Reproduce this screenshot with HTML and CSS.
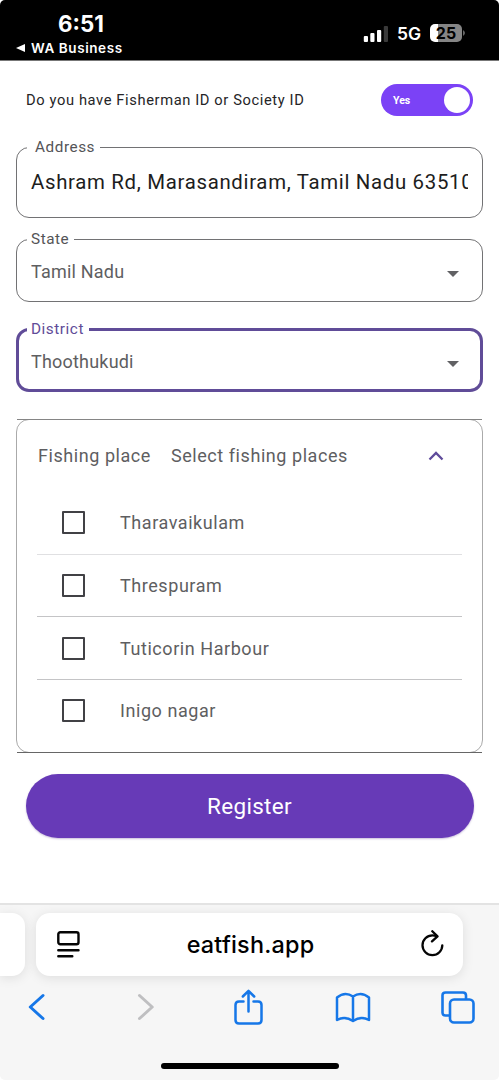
FILE: index.html
```html
<!DOCTYPE html>
<html lang="en">
<head>
<meta charset="utf-8">
<title>Register</title>
<link rel="stylesheet" href="styles.css">
</head>
<body>
<div class="screen">
  <header class="status">
    <div class="status-left">
      <div class="clock">6:51</div>
      <div class="back-app"><svg width="10" height="8" viewBox="0 0 10 8"><path d="M0 4 9 0v8z" fill="#fff"/></svg><span class="app-name">WA Business</span></div>
    </div>
    <div class="status-right">
      <svg width="26" height="17" viewBox="0 0 26 17"><g fill="#fff"><rect x="0.8" y="11" width="4.2" height="6" rx="1"/><rect x="7.3" y="8" width="4.2" height="9" rx="1"/><rect x="14" y="5" width="4.2" height="12" rx="1"/></g><rect x="20.8" y="1" width="4.2" height="16" rx="1" fill="#3a3a3a"/></svg>
      <span class="network">5G</span>
      <div class="battery"><span class="battery-level">25</span></div>
      <svg class="battery-cap" width="2" height="6" viewBox="0 0 2 6"><path d="M0 0q4 3 0 6z" fill="#666"/></svg>
    </div>
  </header>

  <main class="form">
    <div class="question">
      <span class="question-text">Do you have Fisherman ID or Society ID</span>
      <div class="toggle"><span class="toggle-label">Yes</span><span class="knob"></span></div>
    </div>

    <fieldset class="field address">
      <legend><span class="legend-text">Address</span></legend>
      <div class="value"><span class="value-text">Ashram Rd, Marasandiram, Tamil Nadu 63510</span></div>
    </fieldset>
    <fieldset class="field select state">
      <legend><span class="legend-text">State</span></legend>
      <div class="value"><span class="value-text">Tamil Nadu</span><svg class="caret" width="12" height="6" viewBox="0 0 12 6"><path d="M0 0h12L6 6z" fill="#616164"/></svg></div>
    </fieldset>
    <fieldset class="field select district">
      <legend><span class="legend-text">District</span></legend>
      <div class="value"><span class="value-text">Thoothukudi</span><svg class="caret" width="12" height="6" viewBox="0 0 12 6"><path d="M0 0h12L6 6z" fill="#616164"/></svg></div>
    </fieldset>

    <section class="panel">
      <div class="panel-head">
        <span class="panel-title">Fishing place</span>
        <span class="panel-hint">Select fishing places</span>
        <svg class="chevron" width="16" height="10" viewBox="0 0 16 10"><path d="M1.5 8.500 8 2l6.500 6.500" fill="none" stroke="#5f4b9b" stroke-width="2.300"/></svg>
      </div>
      <ul class="places">
        <li class="place"><span class="box"></span><span class="place-name">Tharavaikulam</span></li>
        <li class="place"><span class="box"></span><span class="place-name">Threspuram</span></li>
        <li class="place"><span class="box"></span><span class="place-name">Tuticorin Harbour</span></li>
        <li class="place"><span class="box"></span><span class="place-name">Inigo nagar</span></li>
      </ul>
    </section>

    <button class="register">Register</button>
  </main>

  <footer class="browser">
    <div class="tabs">
      <div class="prev-tab"></div>
      <div class="url-bar">
        <svg width="23" height="27" viewBox="0 0 23 27" fill="none" stroke="#050505" stroke-width="2.4" stroke-linecap="round"><rect x="1.3" y="1.3" width="20.2" height="12" rx="2"/><path d="M1.3 19.2h20.2M1.3 25.3h14"/></svg>
        <span class="url">eatfish.app</span>
        <svg class="reload" width="23" height="27" viewBox="0 0 23 27" fill="none" stroke="#050505" stroke-width="2.3" stroke-linecap="round" stroke-linejoin="round"><path d="M21.3 15.300A9.900 9.900 0 1 1 11.400 5.400Q13.500 5.400 15.800 6.300"/><path d="M11.300 1.200 16.500 6.400l-5.500 5"/></svg>
      </div>
    </div>
    <nav class="tools">
      <svg class="tool-back" width="18" height="30" viewBox="0 0 18 30" fill="none" stroke="#1677e8" stroke-width="3" stroke-linecap="round" stroke-linejoin="round"><path d="M15 3.500 2.300 15 15 26.500"/></svg>
      <svg class="tool-forward" width="18" height="30" viewBox="0 0 18 30" fill="none" stroke="#bfbfc1" stroke-width="3" stroke-linecap="round" stroke-linejoin="round"><path d="M2.500 3.500 15.200 15 2.500 26.500"/></svg>
      <svg class="tool-share" width="30" height="37" viewBox="0 0 30 37" fill="none" stroke="#1677e8" stroke-width="2.500" stroke-linecap="round" stroke-linejoin="round"><path d="M9.500 12.500H5q-3.500 0-3.500 3.500v15Q1.500 34.500 5 34.500h19q3.500 0 3.500-3.500V16q0-3.500-3.500-3.500h-4.500"/><path d="M14.500 22.500V2M8.800 7.500l5.700-5.700 5.700 5.700"/></svg>
      <svg class="tool-book" width="36" height="31" viewBox="0 0 36 31" fill="none" stroke="#1677e8" stroke-width="2.500" stroke-linecap="round" stroke-linejoin="round"><path d="M18 29Q10 23.500 2 28V5.500Q10-1 18 4.500q8-5.500 16 1V28Q26 23.500 18 29zM18 4.500V28"/></svg>
      <svg class="tool-tabs" width="34" height="33" viewBox="0 0 34 33" fill="none" stroke="#1677e8" stroke-width="2.600" stroke-linejoin="round"><rect x="9" y="8.500" width="23.500" height="23" rx="4"/><path d="M9 24.500H4.500q-3 0-3-3v-17q0-3 3-3h17.500q3 0 3 3v4"/></svg>
    </nav>
    <div class="home-bar"></div>
  </footer>
</div>
</body>
</html>
```
FILE: styles.css
```css
* { box-sizing: border-box; }
body { margin: 0; background: #fff; font-family: Roboto, "Liberation Sans", sans-serif; }
.screen { width: 499px; height: 1080px; display: flex; flex-direction: column; overflow: hidden; background: #fff; }

.status { height: 61px; flex: none; display: flex; justify-content: space-between; color: #fff; font-family: Inter, sans-serif; background: #000; border-bottom: 1px solid #777; border-radius: 5px 5px 0 0; }
.status-left { padding: 12px 0 0 16px; }
.clock { font-size: 22.3px; line-height: 24px; font-weight: 700; padding-left: 42px; }
.back-app { display: flex; align-items: center; gap: 5px; height: 23px; font-size: 13.5px; font-weight: 600; letter-spacing: 0.58px; }
.status-right { display: flex; align-items: center; height: 40px; margin-top: 13px; padding-right: 34px; }
.network { font-size: 17.5px; font-weight: 600; margin-left: 8px; }
.battery { width: 32px; height: 18px; margin-left: 9px; border-radius: 5px; display: flex; align-items: center; justify-content: center; background: linear-gradient(90deg, #fff 8px, #858585 8px); }
.battery-level { color: #000; font-size: 16px; line-height: 18px; font-weight: 700; }
.battery-cap { margin-left: 1px; }

.form { display: flex; flex-direction: column; padding: 0 16px; }
.question { height: 78px; flex: none; display: flex; justify-content: space-between; align-items: center; padding: 0 10px; }
.question-text { font-size: 14.7px; color: #252527; letter-spacing: 0.61px; white-space: nowrap; }
.toggle { width: 92px; height: 32px; border-radius: 16px; padding: 0 3px 0 12px; display: flex; align-items: center; justify-content: space-between; background: #7b42f6; }
.toggle-label { color: #fff; font-size: 10.5px; font-weight: 700; }
.knob { width: 26px; height: 26px; border-radius: 50%; background: #fff; }

.field { margin: 0; padding: 0; min-width: 0; border: 1px solid #727274; border-radius: 13px; }
.field legend { height: 17px; line-height: 17px; padding: 0 5px 0 4px; margin-left: 10px; font-size: 15.3px; color: #545457; letter-spacing: 0.55px; }
.value { display: flex; align-items: center; margin: 0 14px; overflow: hidden; white-space: nowrap; }
.address { height: 79px; }
.address legend { padding-left: 8px; }
.address .value { height: 52px; font-size: 20.4px; color: #1d1d20; letter-spacing: 0.68px; }
.select .value { height: 47px; justify-content: space-between; font-size: 18px; color: #5e5e61; letter-spacing: 0.2px; padding-right: 9px; }
.select .caret { margin: 5px 0 0; }
.state { height: 71px; margin-top: 13px; }
.district { height: 71px; margin-top: 19px; border: 3px solid #604c98; }
.district legend { color: #604c98; margin-left: 8px; }
.district .value { margin: 0 12px; height: 46px; }

.panel { position: relative; height: 334px; margin-top: 27px; padding: 0 20px; color: #5e5e61; border: 1px solid #aaa; border-radius: 13px; }
/* square-ended rules drawn over the rounded outline */
.panel::before, .panel::after { content: ""; position: absolute; left: 0; right: 0; height: 1px; }
.panel::before { top: -1px; background: #858585; }
.panel::after { bottom: -1px; background: #666; }
.panel-head { height: 72px; display: flex; align-items: center; padding: 0 18px 1px 1px; font-size: 18px; letter-spacing: 0.56px; }
.panel-hint { margin-left: 20px; }
.chevron { margin-left: auto; }
.places { list-style: none; margin: 0; padding: 0; }
.place { height: 62.67px; display: flex; align-items: center; padding-left: 25px; font-size: 18px; letter-spacing: 0.56px; border-bottom: 1px solid #c4c4c6; }
.place:first-child { border-bottom-color: #e0e0e2; }
.place:last-child { border-bottom: 0; padding-bottom: 2px; }
.box { width: 23px; height: 23px; margin-right: 35px; border: 2px solid #414145; border-radius: 1px; }

.register { margin: 21px 9.5px 0; height: 64px; border: 0; border-radius: 32px; background: #673ab7; color: #fff; font: 400 22.5px Roboto, sans-serif; letter-spacing: 0.3px; box-shadow: 0 1px 2px #c9bedb; }

.browser { margin-top: auto; height: 177px; flex: none; display: flex; flex-direction: column; background: #f6f6f6; border-top: 2px solid #e3e3e3; border-radius: 0 0 5px 5px; }
.tabs { height: 72px; padding-top: 8px; display: flex; gap: 11px; }
.prev-tab { width: 25px; height: 63px; border-radius: 0 13px 13px 0; background: #fff; box-shadow: 0 2px 12px #0000001a; }
.url-bar { width: 427px; height: 63px; padding: 0 19px 0 21px; border-radius: 14px; display: flex; align-items: center; justify-content: space-between; background: #fff; box-shadow: 0 2px 12px #0000001a; }
.url { font-family: Inter, sans-serif; font-size: 23.4px; font-weight: 500; letter-spacing: 0.2px; color: #000; }
.reload { margin-bottom: 2px; }
.tools { height: 60px; display: flex; align-items: center; padding-left: 28px; }
.tool-forward { margin-left: 91px; }
.tool-share { margin-left: 79px; }
.tool-book { margin-left: 71px; }
.tool-tabs { margin-left: 70px; }
.home-bar { width: 178px; height: 6px; margin: 26px 0 0 161px; border-radius: 3px; background: #000; }
```
